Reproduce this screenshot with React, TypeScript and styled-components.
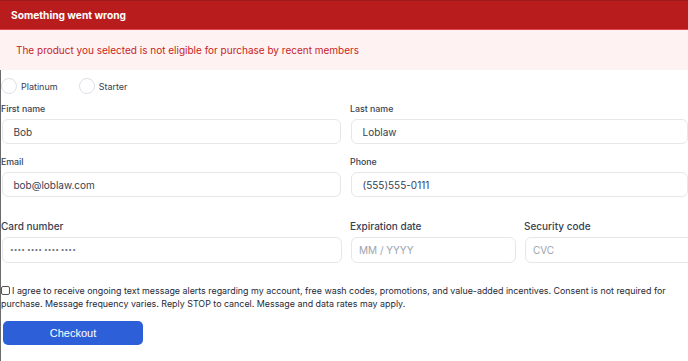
import React from "react";
import styled, { createGlobalStyle } from "styled-components";

const Global = createGlobalStyle`
  html, body { margin: 0; padding: 0; background: #ffffff; }
  body { font-family: Inter, "Noto Sans", sans-serif; }
  * { box-sizing: border-box; }
`;

const Page = styled.div`
  width: 688px;
  height: 361px;
  overflow: hidden;
  background: #fff;
`;

const AlertHeader = styled.div`
  height: 30px;
  background: #b91c1c;
  border-top: 1px solid #9b1c1c;
  border-bottom: 1px solid #e0474a;
  display: flex;
  align-items: center;
  padding-left: 11px;
  color: #fff;
  font-weight: 700;
  font-size: 10.2px;
`;

const AlertBody = styled.div`
  height: 40px;
  background: #fef2f2;
  display: flex;
  align-items: center;
  padding-left: 16px;
  color: #c81e1e;
  font-size: 10px;
`;

const Form = styled.div`
  border-left: 1px solid #6b6b6b;
  padding-top: 8px;
  height: 291px;
  display: flex;
  flex-direction: column;
`;

const RadioRow = styled.div`
  display: flex;
  align-items: center;
  height: 16px;
`;

const RadioOption = styled.label`
  display: flex;
  align-items: center;
  gap: 4px;
  font-size: 9px;
  color: #374151;
  margin-right: 21px;
`;

const RadioCircle = styled.span`
  width: 16px;
  height: 16px;
  border-radius: 50%;
  border: 1px solid #dcdfe4;
  background: #fff;
`;

const TwoCol = styled.div`
  display: grid;
  grid-template-columns: 340px 338px;
  column-gap: 9px;
  row-gap: 11px;
  margin-top: 8px;
`;

const CardRow = styled.div`
  display: grid;
  grid-template-columns: 341px 166px 170px;
  column-gap: 8px;
  margin-top: 21px;
`;

const Field = styled.div`
  display: flex;
  flex-direction: column;
`;

const Label = styled.div<{ $big?: boolean }>`
  font-size: ${(p) => (p.$big ? "10px" : "8.8px")};
  line-height: ${(p) => (p.$big ? "16px" : "14px")};
  color: #374151;
  font-weight: 500;
  margin-bottom: 3px;
`;

const Input = styled.div<{ $placeholder?: boolean; $card?: boolean }>`
  height: ${(p) => (p.$card ? 26 : 25)}px;
  margin-left: 1px;
  border: 1px solid #e5e7eb;
  border-radius: 6px;
  display: flex;
  align-items: center;
  padding-left: ${(p) => (p.$card ? 7 : 10.5)}px;
  font-size: 10px;
  color: ${(p) => (p.$placeholder ? "#9ca3af" : "#374151")};
`;

const Dots = styled.span`
  font-size: 6.5px;
  color: #6b7280;
  letter-spacing: 0.1px;
`;

const Consent = styled.div`
  margin-top: 21px;
  font-size: 8.9px;
  line-height: 13px;
  color: #1f2937;
  padding-right: 4px;
`;

const Check = styled.span`
  display: inline-block;
  width: 9px;
  height: 9px;
  border: 1px solid #555;
  border-radius: 2px;
  margin-right: 2px;
  vertical-align: -1px;
`;

const Button = styled.button`
  margin-top: 11px;
  margin-left: 2px;
  width: 140px;
  height: 24px;
  border: none;
  border-radius: 5px;
  background: #2d5fd9;
  color: #fff;
  font-family: "Liberation Sans", Arial, sans-serif;
  font-size: 11px;
`;

export default function App() {
  return (
    <Page>
      <Global />
      <AlertHeader>Something went wrong</AlertHeader>
      <AlertBody>The product you selected is not eligible for purchase by recent members</AlertBody>
      <Form>
        <RadioRow>
          <RadioOption>
            <RadioCircle />
            Platinum
          </RadioOption>
          <RadioOption>
            <RadioCircle />
            Starter
          </RadioOption>
        </RadioRow>
        <TwoCol>
          <Field>
            <Label>First name</Label>
            <Input>Bob</Input>
          </Field>
          <Field>
            <Label>Last name</Label>
            <Input>Loblaw</Input>
          </Field>
          <Field>
            <Label>Email</Label>
            <Input>bob@loblaw.com</Input>
          </Field>
          <Field>
            <Label>Phone</Label>
            <Input>(555)555-0111</Input>
          </Field>
        </TwoCol>
        <CardRow>
          <Field>
            <Label $big>Card number</Label>
            <Input $card $placeholder>
              <Dots>•••• •••• •••• ••••</Dots>
            </Input>
          </Field>
          <Field>
            <Label $big>Expiration date</Label>
            <Input $card $placeholder>MM / YYYY</Input>
          </Field>
          <Field>
            <Label $big>Security code</Label>
            <Input $card $placeholder>CVC</Input>
          </Field>
        </CardRow>
        <Consent>
          <Check />I agree to receive ongoing text message alerts regarding my account, free wash codes, promotions, and value-added incentives. Consent is not required for purchase. Message frequency varies. Reply STOP to cancel. Message and data rates may apply.
        </Consent>
        <div>
          <Button>Checkout</Button>
        </div>
      </Form>
    </Page>
  );
}
